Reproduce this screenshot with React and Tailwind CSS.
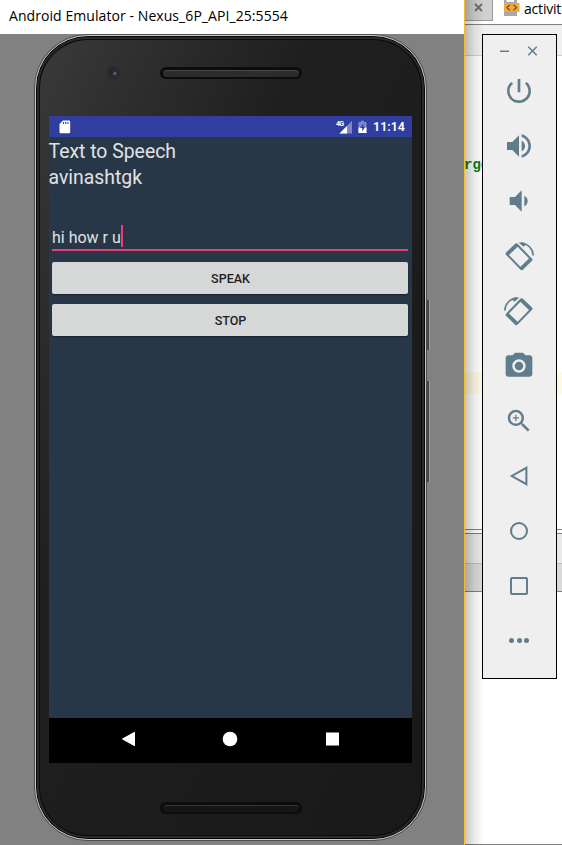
import React from "react";
import {
  MdPowerSettingsNew,
  MdVolumeUp,
  MdVolumeDown,
  MdCameraAlt,
  MdZoomIn,
} from "react-icons/md";

function RotateIcon({ mirrored = false }) {
  return (
    <svg width="32" height="32" viewBox="0 0 32 32" className={mirrored ? "-scale-x-100" : ""}>
      <g transform="translate(16 16.7) rotate(46)">
        <path
          fill="currentColor"
          fillRule="evenodd"
          d="M-10.2-8H10.2A1.8 1.8 0 0 1 12-6.2V6.2A1.8 1.8 0 0 1 10.2 8H-10.2A1.8 1.8 0 0 1-12 6.2V-6.2A1.8 1.8 0 0 1-10.2-8ZM-8.2-6V6H8.2V-6Z"
        />
      </g>
      <path d="M18 3.1C25 3.4 30 9 30.2 15.5" fill="none" stroke="currentColor" strokeWidth="1.6" />
      <path d="M15.5 2.4L20 2.6L22.6 4.8L20.6 6.7Z" fill="currentColor" />
    </svg>
  );
}

function Slot({ children }) {
  return <div className="flex h-[55px] items-center justify-center">{children}</div>;
}

function Toolbar() {
  return (
    <aside className="absolute left-[482px] top-[34px] flex h-[645px] w-[75px] flex-col border border-black bg-[#efefef] text-[#607d8b]">
      <div className="flex h-[28px] items-center pl-[17px] pt-[3px]">
        <svg width="40" height="12" viewBox="0 0 40 12" fill="none" stroke="currentColor" strokeWidth="1.5">
          <path d="M0 6.2H9M28.3 1.8L36.7 10.2M36.7 1.8L28.3 10.2" />
        </svg>
      </div>
      <div className="flex flex-col pr-px">
        <Slot><MdPowerSettingsNew size={32} /></Slot>
        <Slot><MdVolumeUp size={32} /></Slot>
        <Slot><MdVolumeDown size={32} /></Slot>
        <Slot><RotateIcon /></Slot>
        <Slot><RotateIcon mirrored /></Slot>
        <Slot><MdCameraAlt size={32} /></Slot>
        <Slot><MdZoomIn size={30} /></Slot>
        <Slot>
          <svg width="20" height="20" viewBox="0 0 20 20" fill="none" stroke="currentColor" strokeWidth="2">
            <path d="M17.4 1.8V18.2L2.8 10Z" />
          </svg>
        </Slot>
        <Slot><div className="size-[18px] rounded-full border-2 border-[#607d8b]" /></Slot>
        <Slot><div className="size-[18px] rounded-[2px] border-2 border-[#607d8b]" /></Slot>
        <Slot>
          <div className="flex gap-[2.5px]">
            <i className="size-[5px] rounded-full bg-[#607d8b]" />
            <i className="size-[5px] rounded-full bg-[#607d8b]" />
            <i className="size-[5px] rounded-full bg-[#607d8b]" />
          </div>
        </Slot>
      </div>
    </aside>
  );
}

function Editor() {
  return (
    <div className="absolute left-[465px] top-0 flex h-[845px] w-[97px] flex-col overflow-hidden bg-white">
      <div className="flex h-[25px] shrink-0 border-b border-[#808080]">
        <div className="flex h-[21px] w-[28px] shrink-0 border-b border-r border-[#999] bg-[#d0d0d0] pl-[9px] pt-[3px]">
          <svg width="9" height="9" viewBox="0 0 9 9" stroke="#6e6e6e" strokeWidth="1.8">
            <path d="M1 1L8 8M8 1L1 8" />
          </svg>
        </div>
        <svg width="18" height="17" viewBox="0 0 18 17" className="ml-[10px] shrink-0">
          <path d="M1 0H14V16H1Z" fill="#a9a9a9" />
          <path d="M3.5 0H11V2H3.5Z" fill="#fff" />
          <path d="M1 3H16.5V12H1Z" fill="#f2a73b" />
          <path d="M7 4.7L4 7.5L7 10.3M10.5 4.7L13.5 7.5L10.5 10.3" fill="none" stroke="#5d4a24" strokeWidth="1.1" />
        </svg>
        <span className="ml-[3px] -mt-px whitespace-nowrap font-['Open_Sans',sans-serif] text-[14px] leading-[20px] tracking-[-0.2px] text-black">
          activit
        </span>
      </div>
      <div className="h-[31px] shrink-0 border-b border-[#cfcfcf] bg-[#f0f0f0]" />
      <div className="flex h-[316px] shrink-0 items-start pt-[100px] font-['Liberation_Mono',monospace] text-[14px] font-bold leading-[18px] text-[#087d12]">
        <span className="-ml-[1px]">rge</span>
      </div>
      <div className="h-[22px] shrink-0 bg-[#fffae3]" />
      <div className="h-[136px] shrink-0 border-b border-[#808080]" />
      <div className="h-[3px] shrink-0" />
      <div className="h-[31px] shrink-0 border-b border-t border-b-[#bdbdbd] border-t-[#808080] bg-[#e9e9e9]" />
      <div className="h-[28px] shrink-0 border-b border-[#808080] bg-[#dadada]" />
      <div className="grow border-b border-[#808080]" />
      <div className="absolute inset-y-0 left-0 w-[19px] bg-linear-to-r from-black/22 via-black/8 to-transparent" />
    </div>
  );
}

function StatusBar() {
  return (
    <div className="flex h-[21px] shrink-0 items-center bg-[#303f9f] text-white">
      <svg width="12" height="14" viewBox="0 0 12 14" className="ml-[10px]">
        <path d="M4 .5H10A1.2 1.2 0 0 1 11.2 1.7V12A1.2 1.2 0 0 1 10 13.2H1.7A1.2 1.2 0 0 1 .5 12V4Z" fill="#fff" />
        <path d="M4.5 2V4M6.7 2V4M8.9 2V4" stroke="#303f9f" strokeWidth="1.1" />
      </svg>
      <div className="ml-auto flex items-center">
        <svg width="17" height="14" viewBox="0 0 17 14">
          <path d="M16 .8V13.5H3.5Z" fill="#8089c4" />
          <path d="M11 6V13.5H3.5Z" fill="#fff" />
          <text x="0" y="6.2" fontSize="7" fontWeight="700" fontFamily="Roboto, sans-serif" fill="#fff" textLength="8">4G</text>
        </svg>
        <svg width="9" height="14" viewBox="0 0 9 14" className="ml-[5px]">
          <path d="M3 .8H6V2H8.5V13H.5V2H3Z" fill="#8089c4" />
          <path d="M.5 7.5H8.5V13H.5Z" fill="#fff" />
          <path d="M5.5 3.5L2 8H4.2V11.5L7.2 6.8H5Z" fill="#303f9f" />
        </svg>
        <span className="ml-[6px] mr-[7px] pt-px font-['Roboto',sans-serif] text-[12.5px] font-semibold leading-none">
          11:14
        </span>
      </div>
    </div>
  );
}

function AppButton({ label }) {
  return (
    <div className="flex h-[32px] items-center justify-center rounded-[2px] bg-[#d6d7d7] pl-px pt-[2px] font-['Roboto',sans-serif] text-[12.5px] font-medium text-[#1e1f1f] shadow-[0_1px_2px_rgba(0,0,0,0.4)]">
      {label}
    </div>
  );
}

function Screen() {
  return (
    <div className="flex h-[647px] w-[363px] flex-col bg-[#283747] font-['Roboto',sans-serif]">
      <StatusBar />
      <div className="flex grow flex-col text-[#e0e2e4]">
        <div className="-ml-[0.5px] pt-[2px] text-[19.4px] leading-[26px]">
          <p>Text to Speech</p>
          <p>avinashtgk</p>
        </div>
        <div className="ml-[3px] mr-[4px] mt-[34px] flex h-[26px] items-start border-b-2 border-[#ec3d75] text-[16px] leading-[24px]">
          <span className="pt-px">hi how r u</span>
          <span className="h-[22px] w-[2px] bg-[#ec3d75]" />
        </div>
        <div className="ml-[3px] mr-[4px] mt-[11px] flex flex-col gap-[10px]">
          <AppButton label="SPEAK" />
          <AppButton label="STOP" />
        </div>
      </div>
      <div className="flex h-[45px] shrink-0 items-center bg-black pl-[71px]">
        <svg width="220" height="16" viewBox="0 0 220 16" fill="#fff" className="-mt-[3px]">
          <path d="M14.2 .9Q15 .5 15 1.5V14.5Q15 15.5 14.2 15.1L2.4 8.6Q1.8 8.1 2.4 7.6Z" />
          <circle cx="110" cy="8" r="7.3" />
          <rect x="206" y="1.5" width="13" height="13" />
        </svg>
      </div>
    </div>
  );
}

function Speaker({ dim = false }) {
  return (
    <div className="flex h-[12px] w-[142px] items-center rounded-full bg-[#0c0c0c] px-[3px]">
      <div className={`h-[7px] w-full rounded-full border-t ${dim ? "border-[#353535] bg-[#151515]" : "border-[#484848] bg-[#2c2c2c]"}`} />
    </div>
  );
}

function Phone() {
  return (
    <div className="relative ml-[34px] h-[807px] w-[393px] rounded-[54px] border border-[#4d4d4d]">
      <div className="h-full rounded-[53px] border border-[#c9c9c9] bg-[#050505] p-px">
        <div className="h-full rounded-[51px] border-2 border-[#2b2b2b] bg-[#0a0a0a] p-px">
          <div className="flex h-full flex-col items-center rounded-[48px] bg-linear-to-br from-[#3a3a3a] via-[#1f1f1f] via-35% to-[#191919]">
            <div className="relative flex h-[76px] w-full shrink-0 justify-center pt-[27px]">
              <div className="absolute left-[67px] top-[26px] flex size-[13px] items-center justify-center rounded-full bg-[#2a2a2c]">
                <div className="size-[7px] rounded-full bg-radial-[at_70%_65%] from-[#9a6b78] via-[#30283a] via-35% to-[#191724]" />
              </div>
              <Speaker />
            </div>
            <Screen />
            <div className="pt-[39px]"><Speaker dim /></div>
          </div>
        </div>
      </div>
      <div className="absolute left-[392px] top-[265px] h-[50px] w-[3px] border-l-2 border-r border-l-[#484848] border-r-[#a0a0a0]" />
      <div className="absolute left-[392px] top-[346px] h-[101px] w-[3px] border-l-2 border-r border-l-[#484848] border-r-[#a0a0a0]" />
    </div>
  );
}

export default function App() {
  return (
    <main className="relative h-[845px] w-[562px] overflow-hidden bg-white">
      <Editor />
      <section className="absolute left-0 top-0 flex h-[845px] w-[465px] flex-col border-r border-[#f5bd2d] bg-[#818181]">
        <header className="flex h-[34px] shrink-0 items-center bg-white pl-[9px] font-['Open_Sans',sans-serif] text-[14px] text-black">
          <span className="-mt-[3px] whitespace-nowrap tracking-[0.07px]">Android Emulator - Nexus_6P_API_25:5554</span>
        </header>
        <Phone />
      </section>
      <Toolbar />
    </main>
  );
}
